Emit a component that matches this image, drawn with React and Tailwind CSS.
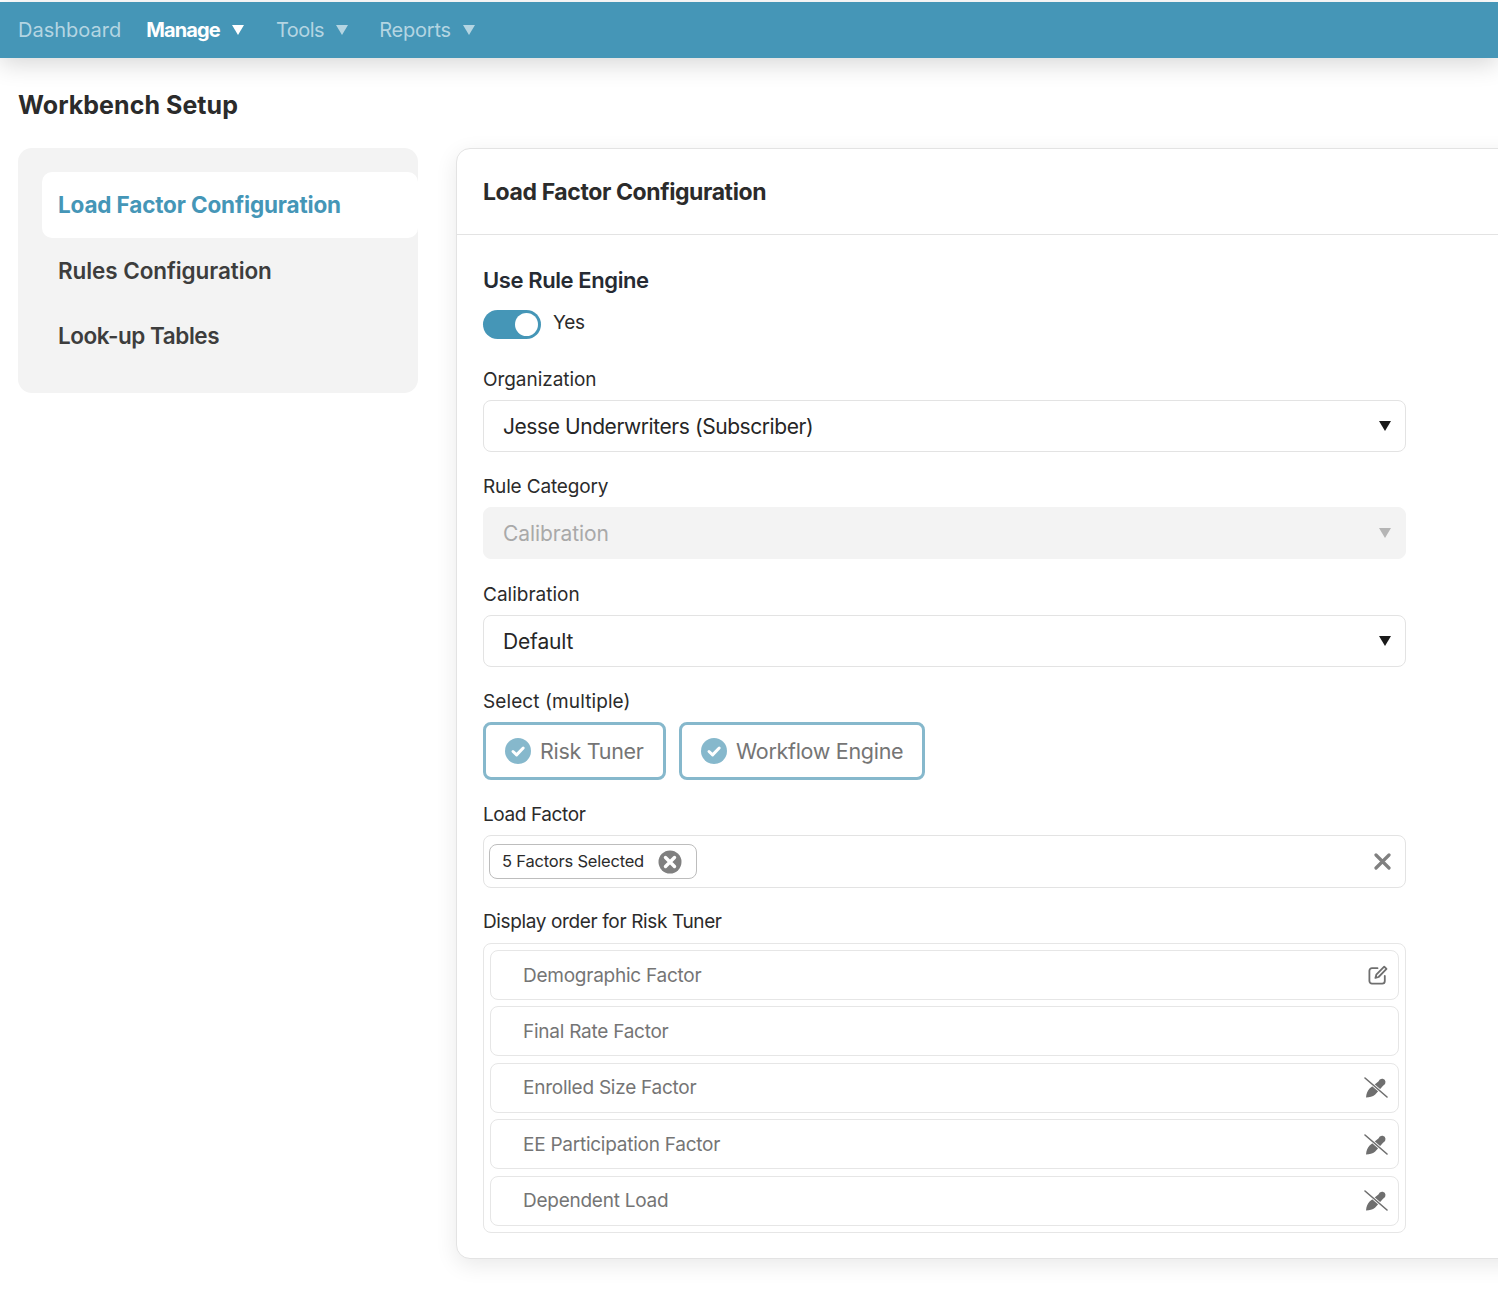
import React from "react";

const Caret = ({ className = "" }) => (
  <svg width="12" height="10" viewBox="0 0 12 10" className={className} fill="currentColor">
    <path d="M0 0h12L6 10z" />
  </svg>
);

const NavItem = ({ children, active, caret, className = "" }) => (
  <div className={`flex items-center ${active ? "text-white font-bold tracking-[-0.85px]" : "text-[#b4d5e2]"} ${className}`}>
    <span>{children}</span>
    {caret && <Caret className="ml-[12px]" />}
  </div>
);

const Label = ({ children, className = "" }) => (
  <div className={`text-[19px] leading-[24px] text-[#2b2b2b] ${className}`}>{children}</div>
);

const Field = ({ label, labelClass, value, valueClass, disabled, className = "" }) => (
  <div className={`flex flex-col ${className}`}>
    <Label className={labelClass}>{label}</Label>
    <div
      className={`mt-[8px] h-[52px] rounded-[8px] flex items-center justify-between pl-[19px] pr-[14px] text-[21px] border ${
        disabled ? "bg-[#f3f3f3] border-[#f3f3f3] text-[#a9a9a9]" : "bg-white border-[#e3e3e3] text-[#262626]"
      }`}
    >
      <span className={`pt-[2px] ${valueClass}`}>{value}</span>
      <Caret className={disabled ? "text-[#b5b5b5]" : "text-[#1a1a1a]"} />
    </div>
  </div>
);

const Check = () => (
  <svg width="26" height="26" viewBox="0 0 26 26">
    <circle cx="13" cy="13" r="13" fill="#86b8cc" />
    <path d="M8 13.5l3.6 3.4L18.2 10" stroke="#fff" strokeWidth="3" fill="none" strokeLinecap="round" strokeLinejoin="round" />
  </svg>
);

const Chip = ({ children, className = "" }) => (
  <div className={`h-[58px] rounded-[8px] border-[3px] border-[#86b8cc] flex items-center pl-[19px] text-[21.5px] text-[#757575] tracking-[-0.3px] ${className}`}>
    <Check />
    <span className="ml-[9px]">{children}</span>
  </div>
);

const EditIcon = () => (
  <svg width="20" height="20" viewBox="0 0 20 20" fill="none" stroke="#6f6f6f" strokeWidth="1.8" strokeLinecap="round" strokeLinejoin="round">
    <path d="M9.5 3.2H4a2.6 2.6 0 0 0-2.6 2.6V16A2.6 2.6 0 0 0 4 18.6h10.2a2.6 2.6 0 0 0 2.6-2.6v-5" />
    <path d="M16.2 1.6l2.3 2.3L10.6 12l-3.2.9.9-3.2z" />
  </svg>
);

const NoEditIcon = () => (
  <svg width="24" height="21" viewBox="0 0 24 21">
    <path d="M2 20.5C2.4 16.5 3.6 13.6 5.6 11.6L14.4 4.4a4 4 0 0 1 4.4-2.6 3.4 3.4 0 0 1 2.7 3 4 4 0 0 1-2.4 4L11 17.8C8.6 19.6 5.6 20.3 2 20.5z" fill="#6f6f6f" />
    <path d="M1 1l22 19" stroke="#fff" strokeWidth="3" />
    <path d="M1 1l22 19" stroke="#6f6f6f" strokeWidth="1.6" strokeLinecap="round" />
  </svg>
);

const OrderRow = ({ children, icon }) => (
  <div className="h-[50px] rounded-[8px] border border-[#e6e6e6] flex items-center justify-between pl-[32px] pr-[10px] text-[19px] text-[#757575] tracking-[-0.25px]">
    <span className="pt-[1.5px]">{children}</span>
    {icon}
  </div>
);

export default function App() {
  return (
    <div className="w-[1498px] h-[1292px] overflow-hidden bg-white font-['Inter','Liberation_Sans',sans-serif]">
      <div className="h-[2px] bg-white" />
      <nav className="h-[56px] bg-[#4596b7] flex items-center pl-[18px] text-[20px] shadow-[0_6px_24px_rgba(0,0,0,0.16)] relative">
        <NavItem>Dashboard</NavItem>
        <NavItem active caret className="ml-[25px]">Manage</NavItem>
        <NavItem caret className="ml-[32px] tracking-[-0.5px]">Tools</NavItem>
        <NavItem caret className="ml-[31px] tracking-[-0.2px]">Reports</NavItem>
      </nav>

      <h1 className="mt-[31px] ml-[18px] text-[25px] leading-[32px] font-bold text-[#2b2b2b] tracking-[0.05px]">Workbench Setup</h1>

      <div className="mt-[27px] ml-[18px] flex items-start">
        <aside className="w-[400px] h-[245px] shrink-0 bg-[#f3f3f3] rounded-[14px] pt-[24px] pl-[24px] text-[22.5px] font-semibold text-[#3d3d3d]">
          <div className="h-[66px] bg-white rounded-[10px] flex items-center pl-[16px] text-[#4596b7] font-bold tracking-[-0.15px]">Load Factor Configuration</div>
          <div className="h-[66px] flex items-center pl-[16px] tracking-[-0.08px]">Rules Configuration</div>
          <div className="h-[64px] flex items-center pl-[16px] tracking-[-0.45px]">Look-up Tables</div>
        </aside>

        <main className="ml-[38px] w-[1100px] shrink-0 h-[1111px] rounded-[14px] border border-[#e3e3e3] bg-white shadow-[0_6px_22px_rgba(0,0,0,0.09)]">
          <div className="h-[86px] border-b border-[#e3e3e3] flex items-center pl-[26px] pt-[2px] text-[23px] font-bold text-[#2b2b2b] tracking-[-0.4px]">
            Load Factor Configuration
          </div>

          <div className="w-[923px] ml-[26px] pt-[31px] flex flex-col">
            <div className="text-[22px] leading-[28px] font-semibold text-[#262b33] tracking-[-0.4px]">Use Rule Engine</div>
            <div className="mt-[16px] flex items-center h-[29px]">
              <div className="w-[58px] h-[29px] rounded-full bg-[#4596b7] relative">
                <div className="absolute right-[3px] top-[3px] w-[23px] h-[23px] rounded-full bg-white" />
              </div>
              <span className="ml-[12px] text-[19px] text-[#2b2b2b] -mt-[2px] tracking-[-0.3px]">Yes</span>
            </div>

            <div className="mt-[29px] flex flex-col">
              <Field label="Organization" labelClass="tracking-[-0.05px]" value="Jesse Underwriters (Subscriber)" valueClass="tracking-[-0.43px]" />
              <Field className="mt-[23px]" label="Rule Category" labelClass="tracking-[-0.15px]" value="Calibration" valueClass="tracking-[-0.1px]" disabled />
              <Field className="mt-[24px]" label="Calibration" labelClass="tracking-[0px]" value="Default" valueClass="tracking-[-0.15px]" />
            </div>

            <Label className="mt-[23px] tracking-[0.1px]">Select (multiple)</Label>
            <div className="mt-[8px] flex gap-[13px]">
              <Chip className="w-[183px]">Risk Tuner</Chip>
              <Chip className="w-[246px]">Workflow Engine</Chip>
            </div>

            <Label className="mt-[23px] tracking-[-0.4px]">Load Factor</Label>
            <div className="mt-[8px] h-[53px] rounded-[8px] border border-[#e3e3e3] flex items-center justify-between pl-[5px] pr-[14px]">
              <div className="h-[35px] w-[208px] rounded-[8px] border border-[#bdbdbd] flex items-center pl-[12px] text-[16.5px] text-[#2b2b2b] tracking-[-0.2px]">
                <span>5 Factors Selected</span>
                <svg width="24" height="24" viewBox="0 0 24 24" className="ml-auto mr-[14px]">
                  <circle cx="12" cy="12" r="11.5" fill="#808080" />
                  <path d="M7.5 7.5l9 9M16.5 7.5l-9 9" stroke="#fff" strokeWidth="3.4" strokeLinecap="round" />
                </svg>
              </div>
              <svg width="17" height="17" viewBox="0 0 17 17">
                <path d="M2 2l13 13M15 2L2 15" stroke="#808080" strokeWidth="3.2" strokeLinecap="round" />
              </svg>
            </div>

            <Label className="mt-[22px] tracking-[-0.37px]">Display order for Risk Tuner</Label>
            <div className="mt-[9px] h-[290px] rounded-[8px] border border-[#e6e6e6] p-[6px] flex flex-col gap-[6.4px]">
              <OrderRow icon={<EditIcon />}>Demographic Factor</OrderRow>
              <OrderRow>Final Rate Factor</OrderRow>
              <OrderRow icon={<NoEditIcon />}>Enrolled Size Factor</OrderRow>
              <OrderRow icon={<NoEditIcon />}>EE Participation Factor</OrderRow>
              <OrderRow icon={<NoEditIcon />}>Dependent Load</OrderRow>
            </div>
          </div>
        </main>
      </div>
    </div>
  );
}
